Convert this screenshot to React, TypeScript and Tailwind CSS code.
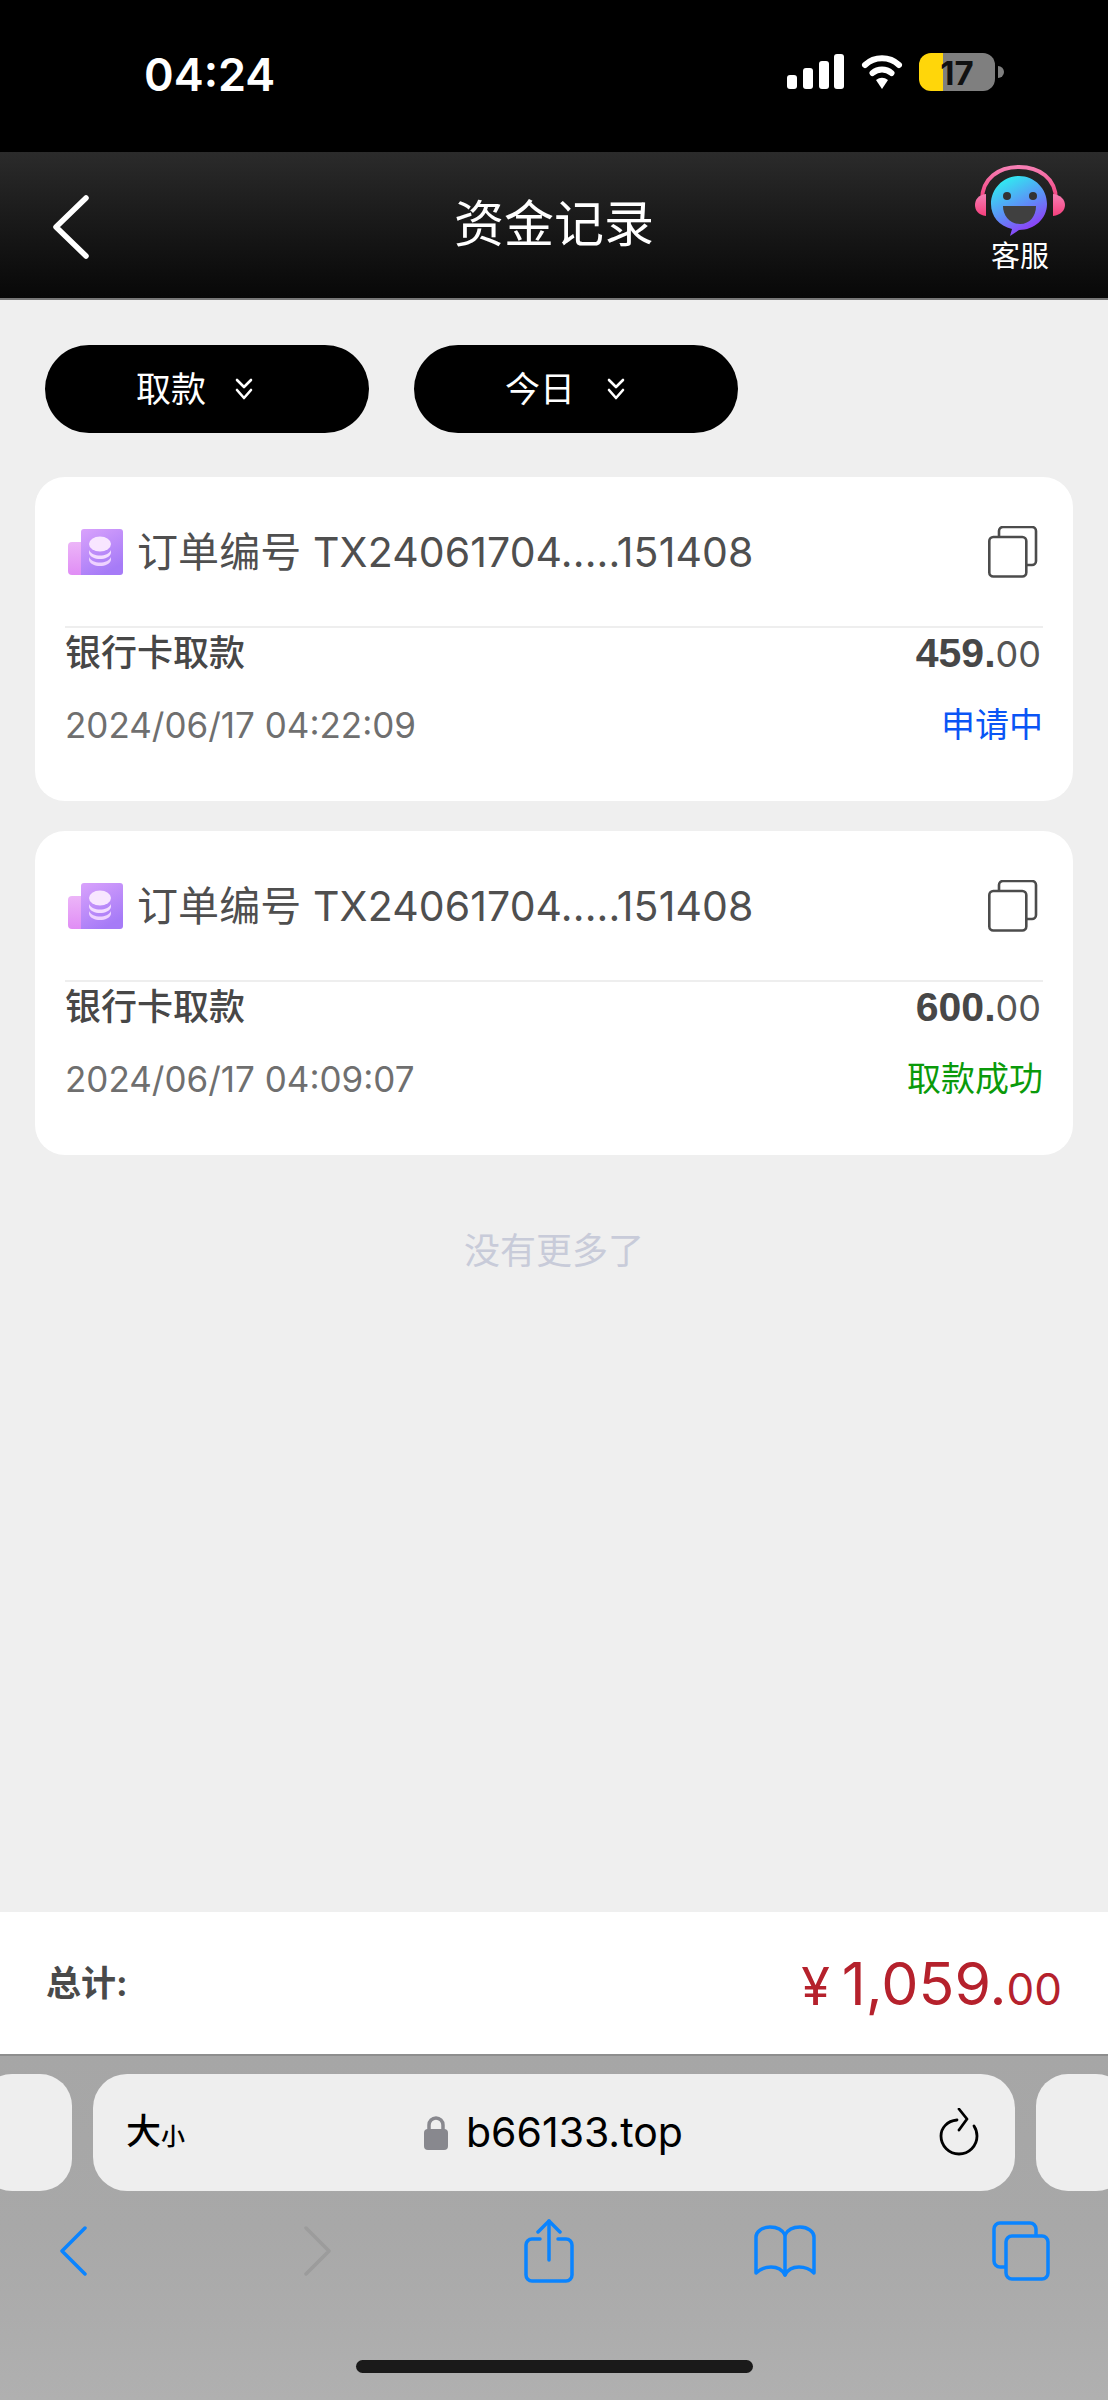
import React from "react";

const Chevrons = () => (
  <svg width="18" height="22" viewBox="0 0 18 22" fill="none" stroke="#fff" strokeWidth="2.6" strokeLinecap="round" strokeLinejoin="round">
    <path d="M2 2l7 7 7-7" />
    <path d="M2 12l7 8 7-8" />
  </svg>
);

const OrderIcon = () => (
  <svg width="55" height="46" viewBox="0 0 55 46" className="shrink-0">
    <defs>
      <linearGradient id="oa" x1="0" y1="0" x2="0" y2="1"><stop offset="0" stopColor="#ecb5f8" /><stop offset="1" stopColor="#e08df5" /></linearGradient>
      <linearGradient id="ob" x1="0" y1="0" x2="0.5" y2="1"><stop offset="0" stopColor="#d9a2fc" /><stop offset="1" stopColor="#a67bf7" /></linearGradient>
    </defs>
    <rect x="0" y="13" width="30" height="33" rx="4" fill="url(#oa)" />
    <path d="M13 3a3 3 0 0 1 3-3h36a3 3 0 0 1 3 3v40a3 3 0 0 1-3 3H13z" fill="url(#ob)" />
    <ellipse cx="32" cy="15" rx="11" ry="7.5" fill="#f8e6ff" />
    <path d="M21 21c2 4 6 5.5 11 5.5s9-1.500 11-5.500v3c-1 4-6 6-11 6s-10-2-11-6z" fill="#f3dcff" />
    <path d="M21 28c2 4 6 5.500 11 5.500s9-1.500 11-5.500v3c-1 4-6 6-11 6s-10-2-11-6z" fill="#eed2ff" />
  </svg>
);

const CopyIcon = () => (
  <svg width="50" height="52" viewBox="0 0 50 52" fill="none" stroke="#4c4c4c" strokeWidth="2.600" className="shrink-0">
    <path d="M11 11V5a4 4 0 0 1 4-4h29a4 4 0 0 1 4 4v30a4 4 0 0 1-4 4h-5" />
    <rect x="1.300" y="11" width="37" height="39.500" rx="4" />
  </svg>
);

const Card = ({ time, whole, status, statusClass }: { time: string; whole: string; status: string; statusClass: string }) => (
  <div className="h-[324px] rounded-[30px] bg-white px-[30px] pt-[45px]">
    <div className="flex h-[60px] items-center">
      <div className="ml-[3px]"><OrderIcon /></div>
      <span className="ml-[14px] flex-1 text-[41px] leading-none text-[#4f4f4f] tracking-[0.1px]">订单编号 TX24061704.....151408</span>
      <div className="mr-[5px]"><CopyIcon /></div>
    </div>
    <div className="mt-[44px] h-[2px] bg-[#eeeeee]" />
    <div className="flex h-[50px] items-center justify-between">
      <span className="text-[36px] font-medium leading-none text-[#474747]">银行卡取款</span>
      <span className="leading-none text-[#474747] mr-[2px]">
        <span className="font-[Liberation_Sans,sans-serif] text-[41px] font-bold">{whole}.</span>
        <span className="text-[36px] text-[#555555]">00</span>
      </span>
    </div>
    <div className="mt-[22px] flex h-[50px] items-center justify-between">
      <span className="text-[35px] leading-none text-[#6f6f6f]">{time}</span>
      <span className={`text-[34px] leading-none ${statusClass}`}>{status}</span>
    </div>
  </div>
);

export default function App() {
  return (
    <div className="flex h-[2400px] w-[1108px] flex-col overflow-hidden bg-[#efefef] font-[Inter,'Noto_Sans_CJK_SC',sans-serif]">
      {/* status bar */}
      <div className="flex h-[152px] shrink-0 items-start bg-black pt-[50px]">
        <span className="ml-[144px] text-[45px] font-semibold leading-[50px] text-white">04:24</span>
        <svg width="224" height="40" viewBox="0 0 224 40" className="ml-auto mr-[97px] mt-[3px]">
          <rect x="0" y="22" width="10" height="14" rx="3" fill="#fff" />
          <rect x="16" y="15" width="10" height="21" rx="3" fill="#fff" />
          <rect x="32" y="8" width="10" height="28" rx="3" fill="#fff" />
          <rect x="47" y="1" width="10" height="35" rx="3" fill="#fff" />
          <path d="M78 12a25 25 0 0 1 34 0" fill="none" stroke="#fff" strokeWidth="6" strokeLinecap="round" />
          <path d="M85.500 20a15 15 0 0 1 19 0" fill="none" stroke="#fff" strokeWidth="6" strokeLinecap="round" />
          <path d="M89 27a10 10 0 0 1 12 0l-6 9z" fill="#fff" />
          <path d="M144 0h52a12 12 0 0 1 12 12v14a12 12 0 0 1-12 12h-52z" fill="#7f7f7f" />
          <path d="M156 0v38h-3" fill="none" />
          <path d="M156 0h-12a12 12 0 0 0-12 12v14a12 12 0 0 0 12 12h12z" fill="#ffd60a" />
          <path d="M211 13a6 6 0 0 1 0 12z" fill="#7f7f7f" />
          <text x="170" y="32" textAnchor="middle" fontFamily="Inter, sans-serif" fontSize="33" fontWeight="700" fill="#111">17</text>
        </svg>
      </div>

      {/* header */}
      <div className="relative flex h-[148px] shrink-0 items-center justify-center border-b-2 border-[#777777] bg-gradient-to-b from-[#2b2b2b] to-[#080808]">
        <svg width="40" height="66" viewBox="0 0 40 66" fill="none" stroke="#fff" strokeWidth="5.500" strokeLinecap="round" strokeLinejoin="round" className="absolute left-[51px] top-[42px]">
          <path d="M35 4L5 33l30 29" />
        </svg>
        <span className="text-[50px] leading-none text-white -mt-[3px]">资金记录</span>
        <div className="absolute left-[975px] top-[13px] flex w-[90px] flex-col items-center">
          <svg width="90" height="72" viewBox="0 0 90 72">
            <defs>
              <linearGradient id="face" x1="0.2" y1="0" x2="0.7" y2="1"><stop offset="0" stopColor="#2bf5f0" /><stop offset="0.55" stopColor="#5f8bf7" /><stop offset="1" stopColor="#9a2cf8" /></linearGradient>
              <linearGradient id="band" x1="0" y1="0" x2="0" y2="1"><stop offset="0" stopColor="#f67fb4" /><stop offset="1" stopColor="#f53f7c" /></linearGradient>
            </defs>
            <path d="M7 35C7 13 24 2 44 2s37 11 37 33" fill="none" stroke="url(#band)" strokeWidth="4" />
            <path d="M11 29v22C3 50 0 45 0 40s3-10 11-11z" fill="url(#band)" />
            <path d="M78 29v22c8-1 12-6 12-11s-4-10-12-11z" fill="url(#band)" />
            <path d="M44 11c16 0 28 13 28 28s-13 26-28 26l-9 6 2-7C24 61 16 51 16 39c0-15 12-28 28-28z" fill="url(#face)" />
            <circle cx="32" cy="31" r="4" fill="#333" />
            <circle cx="58" cy="31" r="4" fill="#333" />
            <path d="M28 41h33c0 10-6 18-16 18s-17-8-17-18z" fill="#404040" />
          </svg>
          <span className="mt-[2px] text-[29px] leading-[36px] text-white">客服</span>
        </div>
      </div>

      {/* content */}
      <div className="flex flex-1 flex-col">
        <div className="ml-[45px] mt-[45px] flex gap-[45px]">
          <div className="flex h-[88px] w-[324px] items-center rounded-full bg-black pl-[91px] text-[35px] leading-none text-white">
            <span>取款</span><span className="ml-[29px] flex"><Chevrons /></span>
          </div>
          <div className="flex h-[88px] w-[324px] items-center rounded-full bg-black pl-[91px] text-[35px] leading-none text-white">
            <span>今日</span><span className="ml-[32px] flex"><Chevrons /></span>
          </div>
        </div>
        <div className="mx-[35px] mt-[44px] flex flex-col gap-[30px]">
          <Card time="2024/06/17 04:22:09" whole="459" status="申请中" statusClass="text-[#0a55f5]" />
          <Card time="2024/06/17 04:09:07" whole="600" status="取款成功" statusClass="text-[#0a9a0a]" />
        </div>
        <div className="mt-[74px] text-center text-[36px] leading-[44px] text-[#c8cbd9]">没有更多了</div>
      </div>

      {/* total */}
      <div className="flex h-[142px] shrink-0 items-center justify-between bg-white pl-[46px] pr-[46px]">
        <span className="text-[35px] font-bold leading-none text-[#4a4a4a]">总计:</span>
        <span className="flex items-baseline leading-none text-[#b5212c]">
          <span className="mr-[12px] text-[52px]">¥</span>
          <span className="text-[59px]">1,059.</span>
          <span className="text-[44px]">00</span>
        </span>
      </div>

      {/* safari */}
      <div className="flex h-[346px] shrink-0 flex-col border-t-2 border-[#8e8e8e] bg-gradient-to-b from-[#a6a6a6] via-[#a8a8a8] to-[#b0b0b0]">
        <div className="mt-[18px] flex h-[117px] gap-[21px]">
          <div className="-ml-[20px] h-full w-[92px] shrink-0 rounded-[32px] bg-[#eeeeee]" />
          <div className="relative flex h-full w-[922px] shrink-0 items-center rounded-[34px] bg-[#eeeeee] text-black">
            <span className="absolute left-[33px] top-[40px] flex items-end font-medium leading-none">
              <span className="text-[35px]">大</span><span className="text-[24px]">小</span>
            </span>
            <div className="ml-[331px] flex items-center">
              <svg width="24" height="34" viewBox="0 0 24 34" fill="none">
                <path d="M5 15V9a7 7 0 0 1 14 0v6" stroke="#88888e" strokeWidth="3.500" />
                <rect x="0" y="13" width="24" height="21" rx="4" fill="#88888e" />
              </svg>
              <span className="ml-[18px] text-[41px] leading-none">b66133.top</span>
            </div>
            <svg width="40" height="48" viewBox="0 0 40 48" fill="none" stroke="#000" strokeWidth="2.800" strokeLinecap="round" strokeLinejoin="round" className="absolute left-[846px] top-[34px]">
              <path d="M18 12C8 13 2 20 2 28a18 18 0 0 0 36 0c0-4-1-7-3-10" />
              <path d="M20 1l8 10-8 11" />
            </svg>
          </div>
          <div className="h-full w-[92px] shrink-0 rounded-[32px] bg-[#eeeeee]" />
        </div>
        <div className="mt-[25px] flex h-[70px] items-center">
          <svg width="28" height="50" viewBox="0 0 28 50" fill="none" stroke="#0a84ff" strokeWidth="3.500" strokeLinecap="round" strokeLinejoin="round" className="ml-[60px]">
            <path d="M25 2L2 25l23 23" />
          </svg>
          <svg width="28" height="50" viewBox="0 0 28 50" fill="none" stroke="#9c9c9c" strokeWidth="3.500" strokeLinecap="round" strokeLinejoin="round" className="ml-[215px]">
            <path d="M3 2l23 23L3 48" />
          </svg>
          <svg width="50" height="64" viewBox="0 0 50 64" fill="none" stroke="#0a84ff" strokeWidth="3.500" strokeLinecap="round" strokeLinejoin="round" className="ml-[193px]">
            <path d="M16 20H8a6 6 0 0 0-6 6v30a6 6 0 0 0 6 6h34a6 6 0 0 0 6-6V26a6 6 0 0 0-6-6h-8" />
            <path d="M25 41V2" />
            <path d="M14 13L25 2l11 11" />
          </svg>
          <svg width="62" height="52" viewBox="0 0 62 52" fill="none" stroke="#0a84ff" strokeWidth="3.500" strokeLinecap="round" strokeLinejoin="round" className="ml-[180px]">
            <path d="M31 10C28 4 22 2 16 2 8 2 2 7 2 12v36c5-5 10-6 15-6 6 0 11 2 14 8" />
            <path d="M31 10c3-6 9-8 15-8 8 0 14 5 14 10v36c-5-5-10-6-15-6-6 0-11 2-14 8z" />
          </svg>
          <svg width="58" height="60" viewBox="0 0 58 60" fill="none" stroke="#0a84ff" strokeWidth="3.500" strokeLinejoin="round" className="ml-[176px]">
            <path d="M13 46H8a6 6 0 0 1-6-6V8a6 6 0 0 1 6-6h30a6 6 0 0 1 6 6v6" />
            <rect x="14" y="15" width="42" height="43" rx="6" />
          </svg>
        </div>
        <div className="mx-auto mt-[74px] h-[13px] w-[397px] rounded-full bg-[#1a1a1a]" />
      </div>
    </div>
  );
}
